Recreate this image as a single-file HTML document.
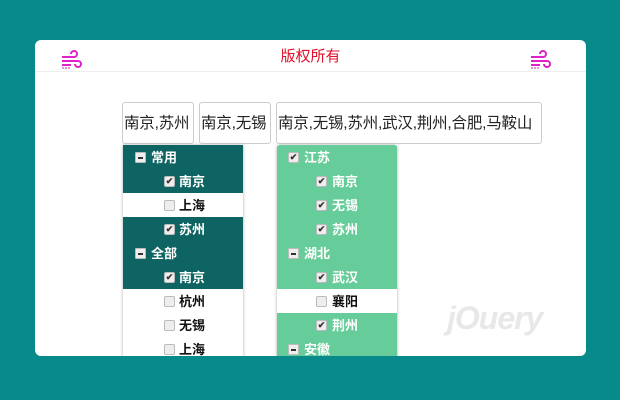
<!DOCTYPE html>
<html><head><meta charset="utf-8"><style>
*{margin:0;padding:0;box-sizing:border-box}
body{width:620px;height:400px;background:#088a8a;position:relative;overflow:hidden;font-family:"Liberation Sans","Noto Sans CJK SC",sans-serif}
.panel{position:absolute;left:35px;top:40px;width:551px;height:316px;background:#fff;border-radius:6px;overflow:hidden}
.hd{position:absolute;left:0;top:0;width:100%;height:32px;border-bottom:1px solid #eee;text-align:center;color:#e0102a;font-size:15px;line-height:34px}
.ic{position:absolute;top:10px}
.inp{position:absolute;top:62px;height:42px;border:1px solid #ccc;border-radius:3px;font-size:15.5px;line-height:41px;padding:0 1px;color:#222;white-space:nowrap;letter-spacing:-0.2px}
.dd{position:absolute;top:105px;width:120px;height:230px;box-shadow:0 0 3px #aaa}
.r{position:absolute;left:0;width:100%;height:24px;font-size:13px;font-weight:bold;color:#fff;line-height:26px}
.r.w{background:#fff;color:#111}
.cb{position:absolute;top:7px;width:11px;height:11px;background:#eee;border:1px solid #bbb;border-radius:2px;font-size:9px;line-height:9px;color:#333;text-align:center}
.mn{position:absolute;top:7px;width:11px;height:11px;background:#eee;border:1px solid #bbb;border-radius:1px}
.mn:after{content:"";position:absolute;left:2px;top:4px;width:5px;height:2px;background:#333}
.t{position:absolute;top:0}
.wm{position:absolute;left:412px;top:260px;color:#e8e8e8;font-size:32px;font-style:italic;font-weight:bold;letter-spacing:-1px}
</style></head><body>
<div class="panel">
<div class="hd">版权所有</div>
<svg class="ic" style="left:25px" width="22" height="20" viewBox="0 0 22 20" fill="none" stroke="#e020c8" stroke-width="2"><path d="M2 7h12a3 3 0 1 0-3-3M2 11h16a3 3 0 1 1-3 3M2 15h9"/><path d="M3 17v2M6 17v2M9 17v2" stroke-width="1"/></svg>
<svg class="ic" style="left:494px" width="22" height="20" viewBox="0 0 22 20" fill="none" stroke="#e020c8" stroke-width="2"><path d="M2 7h12a3 3 0 1 0-3-3M2 11h16a3 3 0 1 1-3 3M2 15h9"/><path d="M3 17v2M6 17v2M9 17v2" stroke-width="1"/></svg>
<div class="inp" style="left:87px;width:72px">南京,苏州</div>
<div class="inp" style="left:164px;width:72px">南京,无锡</div>
<div class="inp" style="left:241px;width:266px">南京,无锡,苏州,武汉,荆州,合肥,马鞍山</div>
<div class="wm">jOuery</div>
<div class="dd" style="left:88px;background:#0e6462">
<div class="r" style="top:0"><span class="mn" style="left:12px"></span><span class="t" style="left:28px">常用</span></div>
<div class="r" style="top:24px"><span class="cb" style="left:41px">✔</span><span class="t" style="left:56px">南京</span></div>
<div class="r w" style="top:48px"><span class="cb" style="left:41px"></span><span class="t" style="left:56px">上海</span></div>
<div class="r" style="top:72px"><span class="cb" style="left:41px">✔</span><span class="t" style="left:56px">苏州</span></div>
<div class="r" style="top:96px"><span class="mn" style="left:12px"></span><span class="t" style="left:28px">全部</span></div>
<div class="r" style="top:120px"><span class="cb" style="left:41px">✔</span><span class="t" style="left:56px">南京</span></div>
<div class="r w" style="top:144px"><span class="cb" style="left:41px"></span><span class="t" style="left:56px">杭州</span></div>
<div class="r w" style="top:168px"><span class="cb" style="left:41px"></span><span class="t" style="left:56px">无锡</span></div>
<div class="r w" style="top:192px"><span class="cb" style="left:41px"></span><span class="t" style="left:56px">上海</span></div>
</div>
<div class="dd" style="left:242px;background:#66cc99;border-radius:3px 3px 0 0">
<div class="r" style="top:0"><span class="cb" style="left:11px">✔</span><span class="t" style="left:27px">江苏</span></div>
<div class="r" style="top:24px"><span class="cb" style="left:39px">✔</span><span class="t" style="left:55px">南京</span></div>
<div class="r" style="top:48px"><span class="cb" style="left:39px">✔</span><span class="t" style="left:55px">无锡</span></div>
<div class="r" style="top:72px"><span class="cb" style="left:39px">✔</span><span class="t" style="left:55px">苏州</span></div>
<div class="r" style="top:96px"><span class="mn" style="left:11px"></span><span class="t" style="left:27px">湖北</span></div>
<div class="r" style="top:120px"><span class="cb" style="left:39px">✔</span><span class="t" style="left:55px">武汉</span></div>
<div class="r w" style="top:144px"><span class="cb" style="left:39px"></span><span class="t" style="left:55px">襄阳</span></div>
<div class="r" style="top:168px"><span class="cb" style="left:39px">✔</span><span class="t" style="left:55px">荆州</span></div>
<div class="r" style="top:192px"><span class="mn" style="left:11px"></span><span class="t" style="left:27px">安徽</span></div>
</div>
</div>
</body></html>
